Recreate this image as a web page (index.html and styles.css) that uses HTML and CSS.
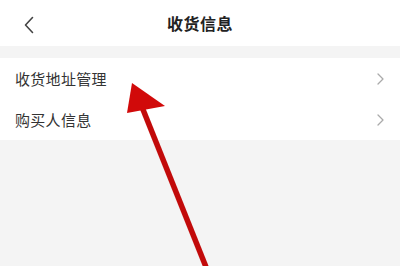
FILE: index.html
```html
<!DOCTYPE html>
<html lang="zh">
<head>
<meta charset="utf-8">
<link rel="stylesheet" href="styles.css">
</head>
<body>
<div class="page">
  <header class="nav">
    <svg class="back" width="12" height="18" viewBox="0 0 12 18"><path d="M9.5 1.5 L2.5 9 L9.5 16.5" fill="none" stroke="#444" stroke-width="1.6" stroke-linecap="round" stroke-linejoin="round"/></svg>
    <h1 class="title">收货信息</h1>
  </header>
  <div class="gap"></div>
  <ul class="list">
    <li class="row"><span>收货地址管理</span><svg class="chev" width="7" height="12" viewBox="0 0 7 12"><path d="M1 1 L6 6 L1 11" fill="none" stroke="#aaa" stroke-width="1.3" stroke-linecap="round" stroke-linejoin="round"/></svg></li>
    <li class="row"><span>购买人信息</span><svg class="chev" width="7" height="12" viewBox="0 0 7 12"><path d="M1 1 L6 6 L1 11" fill="none" stroke="#aaa" stroke-width="1.3" stroke-linecap="round" stroke-linejoin="round"/></svg></li>
  </ul>
  <svg class="arrow" width="400" height="266" viewBox="0 0 400 266">
    <line x1="208" y1="272" x2="140" y2="102" stroke="#c20a0a" stroke-width="5.5"/>
    <polygon points="132,83 127,113 165,106" fill="#d10a0a"/>
  </svg>
</div>
</body>
</html>
```
FILE: styles.css
```css
html, body { margin: 0; padding: 0; }
body {
  font-family: "Noto Sans CJK SC", "Noto Sans", sans-serif;
  background: #f4f4f4;
  width: 400px;
  height: 266px;
  overflow: hidden;
}
.page { position: relative; width: 400px; height: 266px; }
.nav {
  height: 46px;
  background: #fff;
  display: flex;
  align-items: center;
  justify-content: center;
  position: relative;
}
.back { position: absolute; left: 23px; top: 16px; }
.title {
  margin: 0;
  font-size: 16px;
  font-weight: 700;
  color: #222;
  letter-spacing: 0.5px;
}
.gap { height: 12px; }
.list {
  margin: 0;
  padding: 0;
  list-style: none;
  background: #fff;
}
.row {
  height: 41px;
  display: flex;
  align-items: center;
  justify-content: space-between;
  padding: 0 16px 0 15px;
  font-size: 15px;
  color: #333;
}
.row span { letter-spacing: 0.3px; }
.arrow { position: absolute; left: 0; top: 0; }
```
